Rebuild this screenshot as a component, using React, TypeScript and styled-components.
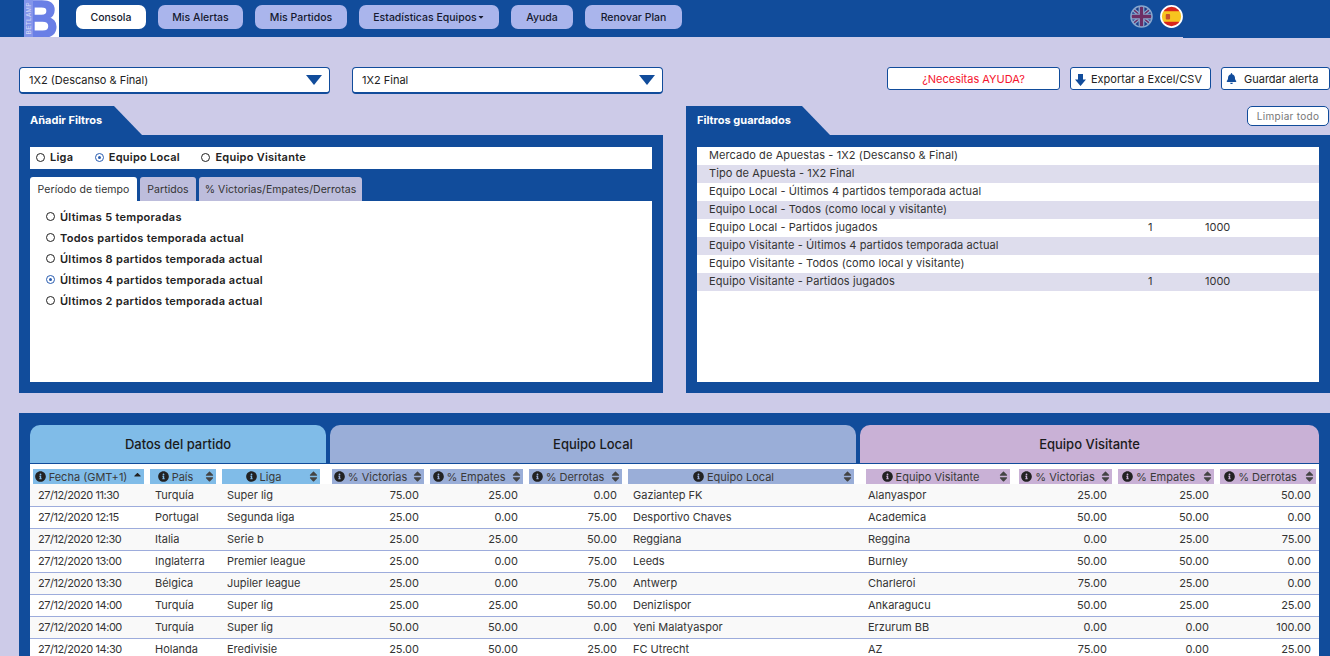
import React from 'react';
import styled, { createGlobalStyle } from 'styled-components';
import { FaBell, FaCaretDown, FaCaretUp, FaInfoCircle, FaSort } from 'react-icons/fa';

const Blue = '#114c9b';
const FontStack = '"Inter", "Noto Sans", "Liberation Sans", sans-serif';

const Global = createGlobalStyle`
  html, body { margin: 0; padding: 0; height: 100%; overflow: hidden; }
  body { background: #cdcbe8; font-family: ${FontStack}; font-size: 11px; color: #333; }
  * { box-sizing: border-box; }
`;

const Header = styled.header`
  position: relative;
  height: 37px;
  background: ${Blue};
  display: flex;
  align-items: flex-start;
  padding-left: 24px;
  &::after {
    content: '';
    position: absolute;
    left: 1183px;
    right: 0;
    top: 37px;
    height: 1px;
    background: ${Blue};
  }
`;

const LogoBox = styled.svg`
  width: 35px;
  height: 37px;
  flex: none;
  display: block;
`;

const Nav = styled.nav`
  display: flex;
  gap: 12px;
  margin: 5px 0 0 17px;
`;

const NavButton = styled.button<{ $active?: boolean; $w: number }>`
  width: ${(p) => p.$w}px;
  height: 24px;
  border: 0;
  padding: 0;
  border-radius: 7px;
  background: ${(p) => (p.$active ? '#fff' : '#aab5ec')};
  color: #151a30;
  font: 500 10.5px ${FontStack};
  display: flex;
  align-items: center;
  justify-content: center;
`;

const Flags = styled.div`
  position: absolute;
  left: 1130px;
  top: 5px;
  display: flex;
  gap: 7px;
`;

const Flag = styled.svg<{ $dim?: boolean }>`
  width: 23px;
  height: 23px;
  display: block;
  opacity: ${(p) => (p.$dim ? 0.5 : 1)};
`;

const Main = styled.main`
  padding: 30px 0 0 19px;
`;

const TopRow = styled.div`
  display: flex;
  align-items: flex-start;
  height: 27px;
`;

const SelectBox = styled.div`
  width: 311px;
  height: 27px;
  margin-right: 22px;
  background: #fff;
  border: 1px solid ${Blue};
  border-bottom-width: 2px;
  border-radius: 4px;
  padding: 0 7px 0 9px;
  display: flex;
  align-items: center;
  justify-content: space-between;
  font-size: 11px;
  color: #222;
`;

const Triangle = styled.svg`
  width: 16px;
  height: 10px;
  display: block;
  margin-top: -1px;
`;

const Actions = styled.div`
  margin-left: auto;
  display: flex;
  gap: 10px;
`;

const ActionButton = styled.button<{ $w: number; $danger?: boolean; $gap?: number }>`
  width: ${(p) => p.$w}px;
  height: 23px;
  background: #fff;
  border: 1px solid ${Blue};
  border-radius: 3px;
  padding: 0 0 0 ${(p) => (p.$danger ? 0 : 4)}px;
  display: flex;
  align-items: center;
  justify-content: ${(p) => (p.$danger ? 'center' : 'flex-start')};
  gap: ${(p) => p.$gap ?? 5}px;
  font: 400 11px ${FontStack};
  color: ${(p) => (p.$danger ? '#f5142d' : '#222')};
  svg { color: ${Blue}; font-size: 11px; flex: none; }
`;

const DownArrow = styled.svg`
  width: 11px;
  height: 12px;
  display: block;
  margin-top: 2px;
`;

const Panels = styled.div`
  display: grid;
  grid-template-columns: 644px 644px;
  gap: 23px;
  margin-top: 12px;
`;

const TabRow = styled.div`
  display: flex;
  justify-content: space-between;
  height: 29px;
`;

const SlantTab = styled.div<{ $w: number }>`
  width: ${(p) => p.$w}px;
  background: ${Blue};
  color: #fff;
  font-weight: 700;
  font-size: 11px;
  padding: 0 0 2px 11px;
  display: flex;
  align-items: center;
  clip-path: polygon(0 0, calc(100% - 28px) 0, 100% 100%, 0 100%);
`;

const ClearButton = styled.button`
  width: 82px;
  height: 20px;
  margin-right: 1px;
  background: #fff;
  border: 1px solid ${Blue};
  border-radius: 5px;
  padding: 0;
  font: 400 10px ${FontStack};
  letter-spacing: 0.3px;
  color: #777;
`;

const PanelBody = styled.div`
  background: ${Blue};
  height: 258px;
  padding: 12px 11px 11px;
  display: flex;
  flex-direction: column;
`;

const RadioBar = styled.div`
  background: #fff;
  height: 22px;
  display: flex;
  align-items: center;
  padding: 0 0 2px 6px;
  gap: 21.5px;
`;

const RadioItem = styled.label`
  display: flex;
  align-items: center;
  gap: 5px;
  font-weight: 600;
  font-size: 11px;
  letter-spacing: 0.25px;
  color: #222;
`;

const RadioMark = styled.span<{ $on?: boolean }>`
  width: 9px;
  height: 9px;
  flex: none;
  border-radius: 50%;
  border: 1.3px solid ${(p) => (p.$on ? '#2a5db0' : '#222')};
  display: flex;
  align-items: center;
  justify-content: center;
  &::after {
    content: '';
    display: ${(p) => (p.$on ? 'block' : 'none')};
    width: 3px;
    height: 3px;
    border-radius: 50%;
    background: #2a5db0;
  }
`;

const Tabs = styled.div`
  display: flex;
  gap: 3px;
  margin-top: 8px;
  height: 24px;
`;

const TabButton = styled.div<{ $active?: boolean; $w: number }>`
  width: ${(p) => p.$w}px;
  border-radius: 3px 3px 0 0;
  background: ${(p) => (p.$active ? '#fff' : '#bdbddc')};
  color: #333;
  display: flex;
  align-items: center;
  justify-content: center;
  font-size: 10.5px;
  letter-spacing: 0.05px;
`;

const TabContent = styled.div`
  flex: 1;
  background: #fff;
  padding: 5px 16px;
  display: flex;
  flex-direction: column;
`;

const OptionRow = styled(RadioItem)`
  height: 21px;
  letter-spacing: 0.28px;
`;

const SavedList = styled.div`
  flex: 1;
  background: #fff;
`;

const SavedRow = styled.div<{ $alt?: boolean }>`
  height: 18px;
  background: ${(p) => (p.$alt ? '#dedded' : '#fff')};
  display: grid;
  grid-template-columns: 439px 57px 1fr;
  align-items: center;
  padding: 0 0 2px 12px;
  font-size: 11px;
  color: #333;
`;

const SavedLabel = styled.span`
  letter-spacing: 0.1px;
`;

const DataPanel = styled.section`
  margin-top: 20px;
  background: ${Blue};
  padding: 12px 11px 0;
  height: 300px;
`;

const Groups = styled.div`
  display: flex;
  gap: 4px;
  height: 38px;
`;

const Group = styled.div<{ $w: number; $bg: string }>`
  width: ${(p) => p.$w}px;
  background: ${(p) => p.$bg};
  border-radius: 10px 10px 0 0;
  display: flex;
  align-items: center;
  justify-content: center;
  font-weight: 500;
  font-size: 13px;
  color: #1b1b1b;
`;

const Table = styled.table`
  width: 1289px;
  table-layout: fixed;
  border-collapse: collapse;
  background: #fff;
  border-top: 1px solid ${Blue};
`;

const Col = styled.col<{ $w: number }>`
  width: ${(p) => p.$w}px;
`;

const HeadCell = styled.th`
  padding: 5px 0 0;
  font-weight: 400;
  height: 20px;
`;

const HeadInner = styled.div<{ $bg: string; $ml: number; $mr: number }>`
  height: 15px;
  margin: 0 ${(p) => p.$mr}px 0 ${(p) => p.$ml}px;
  background: ${(p) => p.$bg};
  display: flex;
  align-items: center;
  font-size: 11px;
  color: #3a3a3a;
`;

const HeadLabel = styled.span`
  flex: 1;
  display: flex;
  align-items: center;
  justify-content: center;
  gap: 3px;
  white-space: nowrap;
  svg { color: #222; font-size: 11px; flex: none; }
`;

const SortIcon = styled.span<{ $up?: boolean }>`
  flex: none;
  width: 9px;
  margin: ${(p) => (p.$up ? '-5px' : '0')} 2px 0 4px;
  display: flex;
  align-items: center;
  justify-content: center;
  color: ${(p) => (p.$up ? '#222' : '#444')};
  font-size: ${(p) => (p.$up ? 11 : 13)}px;
`;

const Row = styled.tr<{ $odd: boolean }>`
  height: 22px;
  background: ${(p) => (p.$odd ? '#f9f9f9' : '#fff')};
  border-bottom: 1px solid #9dacdc;
`;

const Cell = styled.td<{ $right?: boolean; $tight?: boolean }>`
  padding: 0 8px;
  text-align: ${(p) => (p.$right ? 'right' : 'left')};
  letter-spacing: ${(p) => (p.$tight ? '-0.45px' : '0')};
  white-space: nowrap;
  overflow: hidden;
  font-size: 11px;
  color: #333;
`;

const cBlue = '#80bce8';
const cLocal = '#9aaed8';
const cVisit = '#c9b1d6';

const columns = [
  { w: 117, label: 'Fecha (GMT+1)', bg: cBlue, ml: 3, mr: 3, up: true },
  { w: 72, label: 'País', bg: cBlue, ml: 3, mr: 3 },
  { w: 107, label: 'Liga', bg: cBlue, ml: 3, mr: 6 },
  { w: 101, label: '% Victorias', bg: cLocal, ml: 6, mr: 3, right: true },
  { w: 99, label: '% Empates', bg: cLocal, ml: 3, mr: 3, right: true },
  { w: 99, label: '% Derrotas', bg: cLocal, ml: 3, mr: 3, right: true },
  { w: 235, label: 'Equipo Local', bg: cLocal, ml: 3, mr: 6 },
  { w: 155, label: 'Equipo Visitante', bg: cVisit, ml: 6, mr: 5 },
  { w: 100, label: '% Victorias', bg: cVisit, ml: 4, mr: 3, right: true },
  { w: 102, label: '% Empates', bg: cVisit, ml: 3, mr: 3, right: true },
  { w: 102, label: '% Derrotas', bg: cVisit, ml: 3, mr: 3, right: true },
];

const rows = [
  ['27/12/2020 11:30', 'Turquía', 'Super lig', '75.00', '25.00', '0.00', 'Gaziantep FK', 'Alanyaspor', '25.00', '25.00', '50.00'],
  ['27/12/2020 12:15', 'Portugal', 'Segunda liga', '25.00', '0.00', '75.00', 'Desportivo Chaves', 'Academica', '50.00', '50.00', '0.00'],
  ['27/12/2020 12:30', 'Italia', 'Serie b', '25.00', '25.00', '50.00', 'Reggiana', 'Reggina', '0.00', '25.00', '75.00'],
  ['27/12/2020 13:00', 'Inglaterra', 'Premier league', '25.00', '0.00', '75.00', 'Leeds', 'Burnley', '50.00', '50.00', '0.00'],
  ['27/12/2020 13:30', 'Bélgica', 'Jupiler league', '25.00', '0.00', '75.00', 'Antwerp', 'Charleroi', '75.00', '25.00', '0.00'],
  ['27/12/2020 14:00', 'Turquía', 'Super lig', '25.00', '25.00', '50.00', 'Denizlispor', 'Ankaragucu', '50.00', '25.00', '25.00'],
  ['27/12/2020 14:00', 'Turquía', 'Super lig', '50.00', '50.00', '0.00', 'Yeni Malatyaspor', 'Erzurum BB', '0.00', '0.00', '100.00'],
  ['27/12/2020 14:30', 'Holanda', 'Eredivisie', '25.00', '50.00', '25.00', 'FC Utrecht', 'AZ', '75.00', '0.00', '25.00'],
];

const saved = [
  ['Mercado de Apuestas - 1X2 (Descanso & Final)'],
  ['Tipo de Apuesta - 1X2 Final'],
  ['Equipo Local - Últimos 4 partidos temporada actual'],
  ['Equipo Local - Todos (como local y visitante)'],
  ['Equipo Local - Partidos jugados', '1', '1000'],
  ['Equipo Visitante - Últimos 4 partidos temporada actual'],
  ['Equipo Visitante - Todos (como local y visitante)'],
  ['Equipo Visitante - Partidos jugados', '1', '1000'],
];

const options = [
  'Últimas 5 temporadas',
  'Todos partidos temporada actual',
  'Últimos 8 partidos temporada actual',
  'Últimos 4 partidos temporada actual',
  'Últimos 2 partidos temporada actual',
];

const navItems = [
  { label: 'Consola', w: 70, active: true },
  { label: 'Mis Alertas', w: 85 },
  { label: 'Mis Partidos', w: 92 },
  { label: 'Estadísticas Equipos', w: 140, caret: true },
  { label: 'Ayuda', w: 62 },
  { label: 'Renovar Plan', w: 97 },
];

const Logo = () => (
  <LogoBox viewBox="0 0 35 37">
    <rect width="35" height="37" fill="#fff" />
    <text
      transform="translate(0 36.5) scale(1 1.1)"
      fontFamily="'Liberation Sans', sans-serif"
      fontWeight="700"
      fontSize="47"
      fill="#6a7fe6"
      stroke="#6a7fe6"
      strokeWidth="1.5"
    >
      B
    </text>
    <rect x="0" y="0" width="9" height="37" fill="#8395ea" />
    <text transform="translate(7 34.5) rotate(-90)" fontFamily="'Liberation Sans', sans-serif" fontSize="6.5" fill="#d5dbf7" letterSpacing="0.3">BETLAMP</text>
  </LogoBox>
);

const UkFlag = () => (
  <Flag $dim viewBox="0 0 24 24">
    <defs><clipPath id="uk"><circle cx="12" cy="12" r="11" /></clipPath></defs>
    <g clipPath="url(#uk)">
      <rect width="24" height="24" fill="#23327a" />
      <path d="M0 2 L24 22 M24 2 L0 22" stroke="#fff" strokeWidth="4" />
      <path d="M0 2 L24 22 M24 2 L0 22" stroke="#c8102e" strokeWidth="1.5" />
      <path d="M12 0 V24 M0 12 H24" stroke="#fff" strokeWidth="6" />
      <path d="M12 0 V24 M0 12 H24" stroke="#c8102e" strokeWidth="3.4" />
    </g>
    <circle cx="12" cy="12" r="11" fill="none" stroke="#fff" strokeWidth="1.6" />
  </Flag>
);

const EsFlag = () => (
  <Flag viewBox="0 0 24 24">
    <defs><clipPath id="es"><circle cx="12" cy="12" r="11" /></clipPath></defs>
    <g clipPath="url(#es)">
      <rect width="24" height="24" fill="#d8261c" />
      <rect y="6.5" width="24" height="11" fill="#f7c41f" />
      <rect x="6" y="9.5" width="4.5" height="5.5" rx="1" fill="#c8502a" />
    </g>
    <circle cx="12" cy="12" r="11" fill="none" stroke="#fff" strokeWidth="1.8" />
  </Flag>
);

const Arrow = () => (
  <Triangle viewBox="0 0 16 10">
    <polygon points="0,0 16,0 8,10" fill={Blue} />
  </Triangle>
);

const ExportIcon = () => (
  <DownArrow viewBox="0 0 11 12">
    <polygon points="3,0 8,0 8,5.5 11,5.5 5.5,12 0,5.5 3,5.5" fill={Blue} />
  </DownArrow>
);

export default function App() {
  return (
    <>
      <Global />
      <Header>
        <Logo />
        <Nav>
          {navItems.map((n) => (
            <NavButton key={n.label} $w={n.w} $active={n.active}>
              {n.label}
              {n.caret && <FaCaretDown size={8} />}
            </NavButton>
          ))}
        </Nav>
        <Flags>
          <UkFlag />
          <EsFlag />
        </Flags>
      </Header>
      <Main>
        <TopRow>
          <SelectBox>1X2 (Descanso &amp; Final)<Arrow /></SelectBox>
          <SelectBox>1X2 Final<Arrow /></SelectBox>
          <Actions>
            <ActionButton $w={173} $danger>¿Necesitas AYUDA?</ActionButton>
            <ActionButton $w={141}><ExportIcon />Exportar a Excel/CSV</ActionButton>
            <ActionButton $w={109} $gap={7}><FaBell />Guardar alerta</ActionButton>
          </Actions>
        </TopRow>
        <Panels>
          <div>
            <TabRow><SlantTab $w={123}>Añadir Filtros</SlantTab></TabRow>
            <PanelBody>
              <RadioBar>
                <RadioItem><RadioMark />Liga</RadioItem>
                <RadioItem><RadioMark $on />Equipo Local</RadioItem>
                <RadioItem><RadioMark />Equipo Visitante</RadioItem>
              </RadioBar>
              <Tabs>
                <TabButton $active $w={107}>Período de tiempo</TabButton>
                <TabButton $w={56}>Partidos</TabButton>
                <TabButton $w={163}>% Victorias/Empates/Derrotas</TabButton>
              </Tabs>
              <TabContent>
                {options.map((o, i) => (
                  <OptionRow key={o}><RadioMark $on={i === 3} />{o}</OptionRow>
                ))}
              </TabContent>
            </PanelBody>
          </div>
          <div>
            <TabRow>
              <SlantTab $w={144}>Filtros guardados</SlantTab>
              <ClearButton>Limpiar todo</ClearButton>
            </TabRow>
            <PanelBody>
              <SavedList>
                {saved.map((s, i) => (
                  <SavedRow key={s[0]} $alt={i % 2 === 1}>
                    <SavedLabel>{s[0]}</SavedLabel>
                    <span>{s[1]}</span>
                    <span>{s[2]}</span>
                  </SavedRow>
                ))}
              </SavedList>
            </PanelBody>
          </div>
        </Panels>
        <DataPanel>
          <Groups>
            <Group $w={296} $bg={cBlue}>Datos del partido</Group>
            <Group $w={526} $bg={cLocal}>Equipo Local</Group>
            <Group $w={459} $bg={cVisit}>Equipo Visitante</Group>
          </Groups>
          <Table>
            <colgroup>
              {columns.map((c, i) => <Col key={i} $w={c.w} />)}
            </colgroup>
            <thead>
              <tr>
                {columns.map((c, i) => (
                  <HeadCell key={i}>
                    <HeadInner $bg={c.bg} $ml={c.ml} $mr={c.mr}>
                      <HeadLabel><FaInfoCircle />{c.label}</HeadLabel>
                      <SortIcon $up={c.up}>{c.up ? <FaCaretUp /> : <FaSort />}</SortIcon>
                    </HeadInner>
                  </HeadCell>
                ))}
              </tr>
            </thead>
            <tbody>
              {rows.map((r, i) => (
                <Row key={i} $odd={i % 2 === 0}>
                  {r.map((v, j) => (
                    <Cell key={j} $right={columns[j].right} $tight={j === 0}>{v}</Cell>
                  ))}
                </Row>
              ))}
            </tbody>
          </Table>
        </DataPanel>
      </Main>
    </>
  );
}
